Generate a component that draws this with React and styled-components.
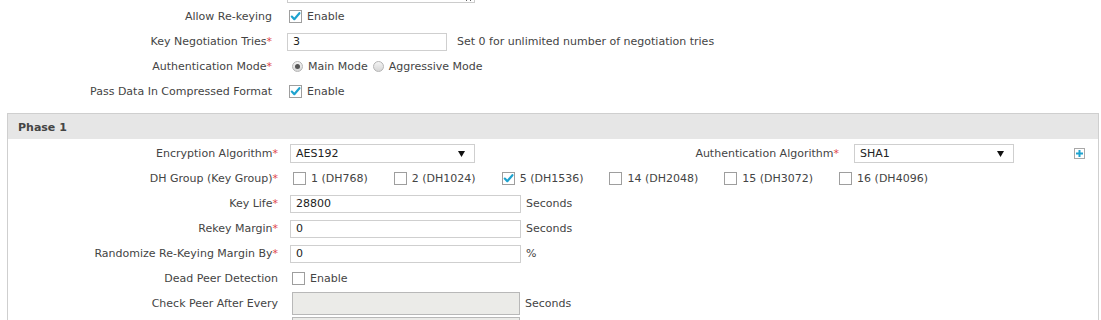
import React from 'react'
import styled, { createGlobalStyle } from 'styled-components'

const GlobalStyle = createGlobalStyle`
  html, body {
    margin: 0;
    padding: 0;
    background: #fff;
    overflow: hidden;
  }
  body {
    font-family: "DejaVu Sans", Verdana, sans-serif;
    font-size: 11px;
    color: #444;
  }
`

const Page = styled.div`
  margin-top: -36px;
  width: 1101px;
  height: 356px;
  overflow: hidden;
`

const Form = styled.div`
  display: grid;
  grid-template-columns: ${p => p.labelWidth}px 1fr;
  grid-template-rows: ${p => p.firstRow || 25}px;
  column-gap: ${p => p.gap}px;
  grid-auto-rows: 25px;
  align-items: center;
`

const Label = styled.label`
  text-align: right;
  white-space: nowrap;
  color: #444;
`

const Req = styled.span`
  color: #e0474c;
`

const Control = styled.div`
  display: flex;
  align-items: ${p => p.align || 'center'};
  align-self: ${p => p.align || 'center'};
  white-space: nowrap;
  min-width: 0;
`

const TextArea = styled.textarea`
  width: 188px;
  height: 38px;
  margin: 0 0 1px 0;
  box-sizing: border-box;
  border: 1px solid #ccc;
  font: inherit;
  resize: both;
`

const Input = styled.input`
  width: ${p => p.w}px;
  height: ${p => (p.disabled ? 23 : 18)}px;
  box-sizing: border-box;
  border: 1px solid ${p => (p.disabled ? '#b8b8b8' : '#cfcfcf')};
  background: ${p => (p.disabled ? '#ebebe8' : '#fff')};
  padding: 0 5px;
  font: inherit;
  color: #222;
  outline: none;
  margin: 0 0 0 ${p => (p.disabled ? 2 : 0)}px;
`

const Hint = styled.span`
  margin-left: ${p => p.gap || 5}px;
  color: #444;
`

const Box = styled.span`
  display: inline-flex;
  align-items: center;
  justify-content: center;
  width: 13px;
  height: 13px;
  box-sizing: border-box;
  border: 1px solid #9e9e9e;
  background: #fff;
  margin-left: ${p => p.ml || 0}px;
  flex: none;
`

const BoxText = styled.span`
  margin-left: 5px;
`

const Check = ({ checked, ml, children }) => (
  <>
    <Box ml={ml}>
      {checked && (
        <svg width="11" height="11" viewBox="0 0 11 11">
          <path d="M1.8 5.6 L4.3 8.2 L9.4 2.2" fill="none" stroke="#1ea3cf" strokeWidth="2.2" strokeLinecap="round" strokeLinejoin="round" />
        </svg>
      )}
    </Box>
    {children && <BoxText>{children}</BoxText>}
  </>
)

const RadioDot = styled.span`
  width: 11px;
  height: 11px;
  border-radius: 50%;
  box-sizing: border-box;
  border: 1px solid #b5b5b5;
  background: linear-gradient(#f4f4f4, #d6d6d6);
  display: inline-flex;
  align-items: center;
  justify-content: center;
  margin-left: ${p => p.ml || 0}px;
  flex: none;
  &::after {
    content: '';
    width: 5px;
    height: 5px;
    border-radius: 50%;
    background: ${p => (p.checked ? '#555' : 'transparent')};
  }
`

const RadioText = styled.span`
  margin-left: 5px;
`

const Section = styled.div`
  margin: 9px 2px 0 7px;
  border: 1px solid #cfcfcf;
  border-bottom: none;
`

const SectionHead = styled.div`
  height: 25px;
  background: #e6e6e6;
  display: flex;
  align-items: center;
  padding: 2px 0 0 10px;
  box-sizing: border-box;
  font-weight: bold;
  color: #444;
`

const SectionBody = styled.div`
  padding-top: 2px;
`

const Select = styled.div`
  width: ${p => p.w}px;
  height: 19px;
  box-sizing: border-box;
  border: 1px solid #cfcfcf;
  display: flex;
  align-items: center;
  justify-content: space-between;
  padding: 0 9px 0 5px;
  color: #222;
  flex: none;
`

const SideLabel = styled(Label)`
  width: 364px;
  flex: none;
  margin-right: 15px;
`

const PlusBtn = styled.span`
  margin-left: auto;
  margin-right: 13px;
  width: 11px;
  height: 11px;
  box-sizing: border-box;
  border: 1px solid #a8a8a8;
  display: inline-flex;
  align-items: center;
  justify-content: center;
`

const Groups = styled.div`
  display: flex;
  align-items: center;
  gap: 26px;
  padding-left: 3px;
`

const GroupItem = styled.div`
  display: flex;
  align-items: center;
`

const Arrow = () => (
  <svg width="7" height="6" viewBox="0 0 7 6">
    <path d="M0 0 H7 L3.5 6 Z" fill="#111" />
  </svg>
)

const DropDown = ({ w, value }) => (
  <Select w={w}>
    <span>{value}</span>
    <Arrow />
  </Select>
)

const dhGroups = [
  { label: '1 (DH768)' },
  { label: '2 (DH1024)' },
  { label: '5 (DH1536)', checked: true },
  { label: '14 (DH2048)' },
  { label: '15 (DH3072)' },
  { label: '16 (DH4096)' },
]

export default function App() {
  return (
    <Page>
      <GlobalStyle />
      <Form labelWidth={272} gap={15} firstRow={40}>
        <span />
        <Control align="end">
          <TextArea defaultValue="" />
        </Control>

        <Label>Allow Re-keying</Label>
        <Control><Check checked ml={2}>Enable</Check></Control>

        <Label>Key Negotiation Tries<Req>*</Req></Label>
        <Control>
          <Input w={160} defaultValue="3" />
          <Hint gap={10}>Set 0 for unlimited number of negotiation tries</Hint>
        </Control>

        <Label>Authentication Mode<Req>*</Req></Label>
        <Control>
          <RadioDot checked ml={5} />
          <RadioText>Main Mode</RadioText>
          <RadioDot ml={5} />
          <RadioText>Aggressive Mode</RadioText>
        </Control>

        <Label>Pass Data In Compressed Format</Label>
        <Control><Check checked ml={2}>Enable</Check></Control>
      </Form>

      <Section>
        <SectionHead>Phase 1</SectionHead>
        <SectionBody>
          <Form labelWidth={270} gap={12}>
            <Label>Encryption Algorithm<Req>*</Req></Label>
            <Control>
              <DropDown w={185} value="AES192" />
              <SideLabel>Authentication Algorithm<Req>*</Req></SideLabel>
              <DropDown w={160} value="SHA1" />
              <PlusBtn>
                <svg width="7" height="7" viewBox="0 0 7 7">
                  <path d="M3.5 0 V7 M0 3.5 H7" stroke="#1ea3cf" strokeWidth="2" />
                </svg>
              </PlusBtn>
            </Control>

            <Label>DH Group (Key Group)<Req>*</Req></Label>
            <Control>
              <Groups>
                {dhGroups.map((g, i) => (
                  <GroupItem key={i}>
                    <Check checked={g.checked}>{g.label}</Check>
                  </GroupItem>
                ))}
              </Groups>
            </Control>

            <Label>Key Life<Req>*</Req></Label>
            <Control>
              <Input w={231} defaultValue="28800" />
              <Hint>Seconds</Hint>
            </Control>

            <Label>Rekey Margin<Req>*</Req></Label>
            <Control>
              <Input w={231} defaultValue="0" />
              <Hint>Seconds</Hint>
            </Control>

            <Label>Randomize Re-Keying Margin By<Req>*</Req></Label>
            <Control>
              <Input w={231} defaultValue="0" />
              <Hint>%</Hint>
            </Control>

            <Label>Dead Peer Detection</Label>
            <Control><Check ml={2}>Enable</Check></Control>

            <Label>Check Peer After Every</Label>
            <Control>
              <Input w={228} disabled defaultValue="" />
              <Hint>Seconds</Hint>
            </Control>

            <span />
            <Control>
              <Input w={228} disabled defaultValue="" />
            </Control>
          </Form>
        </SectionBody>
      </Section>
    </Page>
  )
}
